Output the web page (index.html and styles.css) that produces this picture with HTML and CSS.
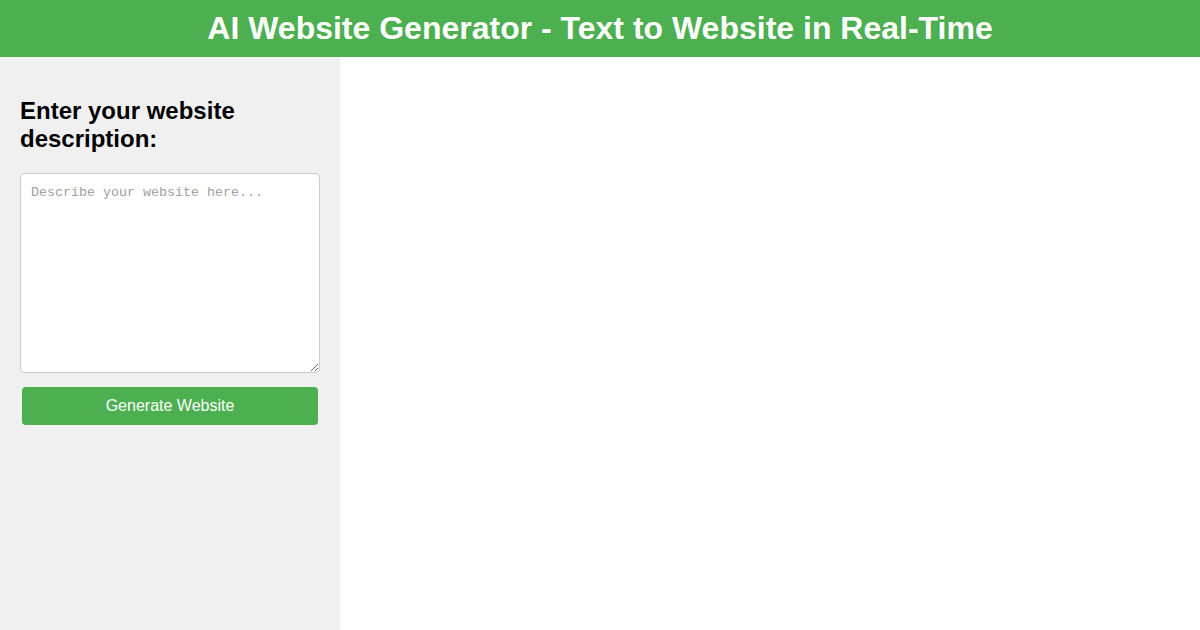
FILE: index.html
```html
<!DOCTYPE html>
<html lang="en">
<head>
    <meta charset="UTF-8">
    <meta name="viewport" content="width=device-width, initial-scale=1.0">
    <title>AI Website Generator</title>
    <link rel="stylesheet" href="styles.css">
</head>
<body>

    <header>
        <h1>AI Website Generator - Text to Website in Real-Time</h1>
    </header>

    <div class="container">
        <div class="sidebar">
            <h2>Enter your website description:</h2>
            <textarea id="prompt" placeholder="Describe your website here..."></textarea>
            <button id="generate">Generate Website</button>
        </div>

        <!-- live preview of the generated page -->
        <div class="preview"></div>
    </div>

</body>
</html>
```

FILE: styles.css
```css
body {
    font-family: 'Liberation Sans', Arial, sans-serif;
    margin: 0;
    height: 100vh;
    display: flex;
    flex-direction: column;
}

header {
    background-color: #4CAF50;
    color: white;
    text-align: center;
    padding: 10px 0;
}

header h1 {
    margin: 0;
    font-size: 32px;
    line-height: 37px;
}

.container {
    flex: 1;
    display: flex;
}

.sidebar {
    width: 300px;
    padding: 20px;
    background-color: #f0f0f0;
}

.sidebar h2 {
    font-size: 24px;
    margin: 20px 0;
    color: #000;
}

textarea {
    display: block;
    box-sizing: border-box;
    width: 300px;
    height: 200px;
    padding: 10px;
    border: 1px solid #ccc;
    border-radius: 4px;
    font-family: 'Liberation Mono', monospace;
    font-size: 13.33px;
    line-height: 18px;
    margin: 0;
}

textarea::placeholder {
    color: #a0a0a0;
}

button {
    display: block;
    width: 296px;
    height: 38px;
    margin: 14px 2px 0;
    background-color: #4CAF50;
    color: white;
    border: none;
    border-radius: 4px;
    font-family: 'Liberation Sans', Arial, sans-serif;
    font-size: 16px;
    cursor: pointer;
}

button:hover {
    background-color: #45a049;
}

.preview {
    flex: 1;
    background-color: white;
}
```
